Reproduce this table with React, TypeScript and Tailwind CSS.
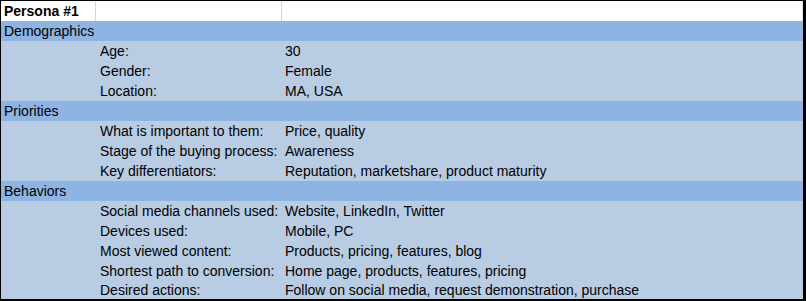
import React from "react";

type Row =
  | { kind: "section"; label: string }
  | { kind: "item"; label: string; value: string };

const rows: Row[] = [
  { kind: "section", label: "Demographics" },
  { kind: "item", label: "Age:", value: "30" },
  { kind: "item", label: "Gender:", value: "Female" },
  { kind: "item", label: "Location:", value: "MA, USA" },
  { kind: "section", label: "Priorities" },
  { kind: "item", label: "What is important to them:", value: "Price, quality" },
  { kind: "item", label: "Stage of the buying process:", value: "Awareness" },
  { kind: "item", label: "Key differentiators:", value: "Reputation, marketshare, product maturity" },
  { kind: "section", label: "Behaviors" },
  { kind: "item", label: "Social media channels used:", value: "Website, LinkedIn, Twitter" },
  { kind: "item", label: "Devices used:", value: "Mobile, PC" },
  { kind: "item", label: "Most viewed content:", value: "Products, pricing, features, blog" },
  { kind: "item", label: "Shortest path to conversion:", value: "Home page, products, features, pricing" },
  { kind: "item", label: "Desired actions:", value: "Follow on social media, request demonstration, purchase" },
];

const cell = "flex items-center h-full pt-px whitespace-nowrap overflow-visible";

export default function App() {
  return (
    <div className="w-[806px] h-[301px] bg-white border-black border-t border-l border-r-[3px] border-b-2 text-[14px] text-black font-['Liberation_Sans',Arial,sans-serif]">
      <div className="grid grid-cols-[95px_186px_1fr] h-full [grid-template-rows:repeat(14,20px)_18px]">
        <div className={`${cell} pl-[3px] font-bold border-r border-[#d4d4d4]`}>Persona #1</div>
        <div className={`${cell} border-r border-[#d4d4d4]`} />
        <div className={`${cell} border-r border-[#e2e2e2]`} />
        {rows.map((r, i) =>
          r.kind === "section" ? (
            <div key={i} className={`${cell} col-span-3 bg-[#8db4e2] pl-[3px]`}>
              {r.label}
            </div>
          ) : (
            <React.Fragment key={i}>
              <div className={`${cell} bg-[#b8cce4]`} />
              <div className={`${cell} bg-[#b8cce4] pl-[4px]`}>{r.label}</div>
              <div className={`${cell} bg-[#b8cce4] pl-[3px]`}>{r.value}</div>
            </React.Fragment>
          )
        )}
      </div>
    </div>
  );
}
